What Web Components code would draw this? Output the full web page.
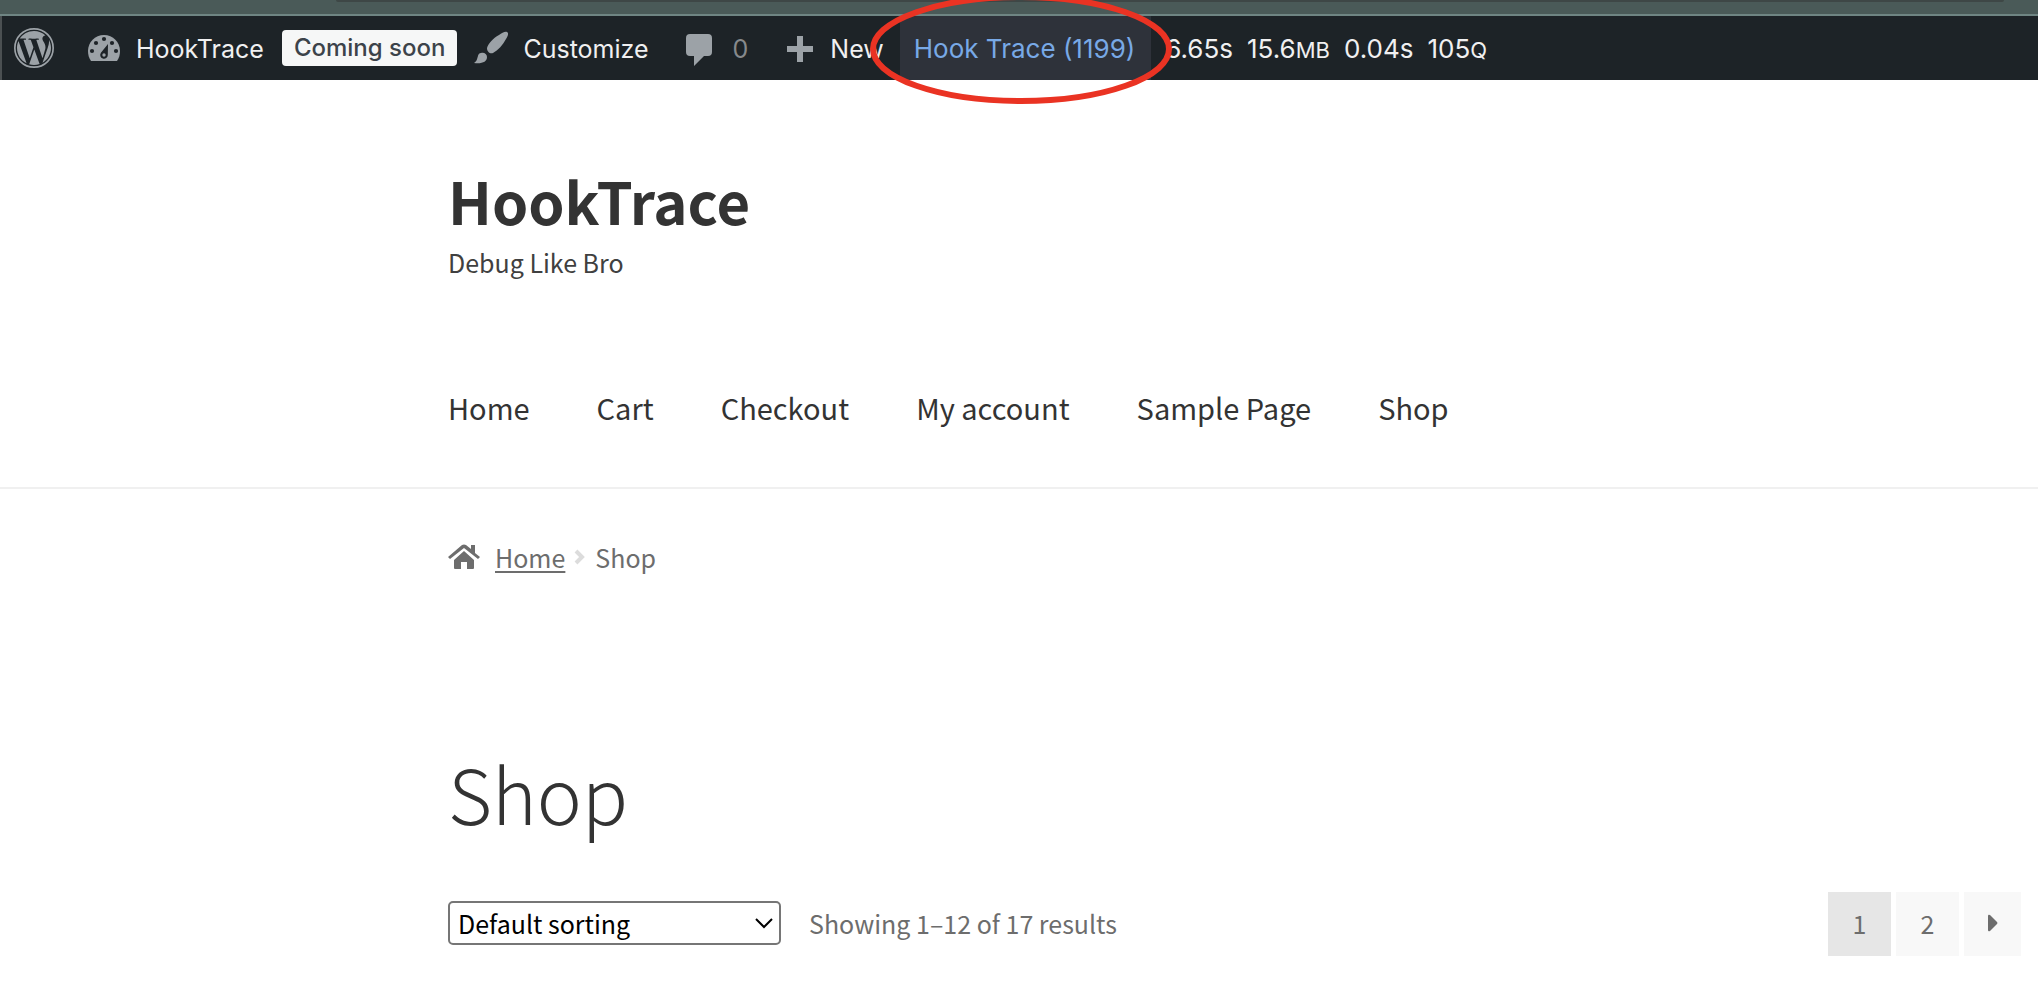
<!DOCTYPE html>
<html lang="en">
<head>
<meta charset="utf-8">
<meta name="viewport" content="width=device-width, initial-scale=1">
<title>Shop - HookTrace</title>
<style>
  body {
    margin: 0;
    background: #fff;
    color: #6d6d6d;
    font: 25px/36px "Noto Sans CJK SC", "Noto Sans", sans-serif;
    --gutter-left: 448px;
    --gutter-right: 17px;
  }
</style>
</head>
<body>
<browser-edge></browser-edge>
<admin-bar></admin-bar>
<site-header name="HookTrace" tagline="Debug Like Bro"></site-header>
<bread-crumb>
  <a slot="parent" href="#home">Home</a>
  Shop
</bread-crumb>
<shop-page heading="Shop">
  <sort-select slot="tools"></sort-select>
  <span slot="tools">Showing 1–12 of 17 results</span>
  <page-numbers slot="pages"></page-numbers>
</shop-page>

<script>
class BrowserEdge extends HTMLElement {
  constructor() {
    super();
    this.attachShadow({ mode: 'open' });
  }

  connectedCallback() {
    this.shadowRoot.innerHTML = `
      <style>
        :host {
          display: block;
          box-sizing: border-box;
          height: 16px;
          padding: 0 34px 0 336px;
          background: #4a5a58;
          border-bottom: 2px solid #6f8583;
        }
        div {
          height: 2px;
          background: #3e4746;
          border-radius: 0 0 12px 12px;
        }
      </style>
      <div></div>
    `;
  }
}

class AdminBar extends HTMLElement {
  constructor() {
    super();
    this.attachShadow({ mode: 'open' });
  }

  connectedCallback() {
    this.shadowRoot.innerHTML = `
      <style>
        :host {
          display: block;
          background: #1d2327;
          border-left: 2px solid #4b5052;
          color: #f0f0f1;
          font: 25px/62px Inter, "Liberation Sans", sans-serif;
        }
        nav {
          display: flex;
          height: 64px;
          padding-left: 12px;
          white-space: nowrap;
        }
        a {
          display: flex;
          align-items: center;
          padding-top: 2px;
          color: inherit;
          text-decoration: none;
        }
        svg { display: block; fill: #9ca2a7; }
        .logo, .status { padding-top: 0; }
        .logo { margin-right: 32px; }
        .site { gap: 14px; margin-right: 18px; }
        .badge {
          padding: 0 12px;
          border-radius: 4px;
          background: #f6f7f7;
          color: #3c434a;
          font-weight: 500;
          font-size: 24px;
          line-height: 36px;
        }
        .customize { gap: 14px; margin: 0 36px 0 16px; }
        .comments { gap: 20px; margin-right: 38px; color: #86898c; }
        .new { gap: 16px; margin-right: 16px; }
        .trace, .stats { font-size: 26px; }
        .trace {
          position: relative;
          padding-left: 14px;
          padding-right: 16px;
          background: #2e323a;
          color: #78a9e6;
        }
        .mark {
          position: absolute;
          left: -30px;
          top: -22px;
          fill: none;
          stroke: #ea3323;
          stroke-width: 6;
          z-index: 1;
        }
        .stats { gap: 14px; margin-left: 14px; }
        small { font-size: 22px; }
      </style>
      <nav aria-label="Toolbar">
        <a class="logo" href="#about" aria-label="About WordPress">
          <svg width="40" height="40" viewBox="0 0 24 24">
            <circle cx="12" cy="12" r="11.5" fill="none" stroke="#9ca2a7"/>
            <path transform="translate(.66 .66) scale(.945)" d="M21.469 6.825c.84 1.537 1.318 3.3 1.318 5.175 0 3.979-2.156 7.456-5.363 9.325l3.295-9.527c.615-1.54.82-2.771.82-3.864 0-.405-.026-.78-.07-1.11m-7.981.105c.647-.03 1.232-.105 1.232-.105.582-.075.514-.93-.067-.899 0 0-1.755.135-2.88.135-1.064 0-2.85-.15-2.85-.15-.585-.03-.661.855-.075.885 0 0 .54.061 1.125.09l1.68 4.605-2.37 7.08L5.354 6.9c.649-.03 1.234-.1 1.234-.1.585-.075.516-.93-.065-.896 0 0-1.746.138-2.874.138-.2 0-.438-.008-.69-.015C4.911 3.15 8.235 1.215 12 1.215c2.809 0 5.365 1.072 7.286 2.833-.046-.003-.091-.009-.141-.009-1.06 0-1.812.923-1.812 1.914 0 .89.513 1.643 1.06 2.531.411.72.89 1.643.89 2.977 0 .915-.354 1.994-.821 3.479l-1.075 3.585-3.9-11.61zM12 22.784c-1.059 0-2.081-.153-3.048-.437l3.237-9.406 3.315 9.087c.024.053.05.101.078.149-1.12.393-2.325.609-3.582.609M1.211 12c0-1.564.336-3.05.935-4.39L7.29 21.709C3.694 19.96 1.212 16.271 1.211 12"/>
          </svg>
        </a>
        <a class="site" href="#dashboard">
          <svg width="36" height="32" viewBox="0 0 36 32">
            <path d="M18 2C9 2 2 9 2 18c0 4 1 7 3 10h26c2-3 3-6 3-10C34 9 27 2 18 2z"/>
            <g fill="#1d2327">
              <circle cx="18" cy="6" r="2.1"/><circle cx="10" cy="10" r="2.1"/>
              <circle cx="26" cy="10" r="2.1"/><circle cx="6" cy="18" r="2.1"/>
              <circle cx="30" cy="18" r="2.1"/>
              <path d="M22 11l-.2 11a3.8 3.8 0 1 1-6.9-2.2z"/>
            </g>
            <circle cx="18" cy="22" r="1.7"/>
          </svg>
          HookTrace
        </a>
        <a class="status" href="#visibility"><span class="badge">Coming soon</span></a>
        <a class="customize" href="#customize">
          <svg width="36" height="36" viewBox="0 0 36 36">
            <path d="M34 1c2 1 1 4-1 7-3 6-8 11-13 14-3 1-6-1-6-5 1-4 6-10 12-13 3-2 6-4 8-3z"/>
            <path d="M8 22c3-1 6 1 6 4 0 5-5 7-13 6 3-2 3-4 4-7 0-1 1-3 3-3z"/>
          </svg>
          Customize
        </a>
        <a class="comments" href="#comments">
          <svg width="28" height="36" viewBox="0 0 28 36">
            <path d="M5 3h18q4 0 4 4v14q0 4-4 4h-4L9 35V25H5q-4 0-4-4V7q0-4 4-4z"/>
          </svg>
          0
        </a>
        <a class="new" href="#new">
          <svg width="28" height="28" viewBox="0 0 28 28"><path d="M11 1h6v10h10v6H17v10h-6V17H1v-6h10z"/></svg>
          New
        </a>
        <a class="trace" href="#trace">
          Hook Trace (1199)
          <svg class="mark" width="302" height="110"><ellipse cx="151" cy="55" rx="148" ry="52"/></svg>
        </a>
        <a class="stats" href="#queries">
          <span>6.65s</span>
          <span>15.6<small>MB</small></span>
          <span>0.04s</span>
          <span>105<small>Q</small></span>
        </a>
      </nav>
    `;
  }
}

class SiteHeader extends HTMLElement {
  constructor() {
    super();
    this.attachShadow({ mode: 'open' });
  }

  connectedCallback() {
    const pages = ['Home', 'Cart', 'Checkout', 'My account', 'Sample Page', 'Shop'];

    this.shadowRoot.innerHTML = `
      <style>
        :host {
          display: block;
          padding: 88px var(--gutter-right) 60px var(--gutter-left);
          border-bottom: 2px solid #f0f0f0;
          color: #404040;
        }
        a { color: #333; text-decoration: none; }
        .title { font-size: 58px; font-weight: 700; line-height: 64px; }
        p { margin: 12px 0 107px; }
        nav {
          display: flex;
          flex-wrap: wrap;
          gap: 67px;
          font-size: 29px;
          line-height: 40px;
        }
      </style>
      <a class="title" href="#home">${this.getAttribute('name')}</a>
      <p>${this.getAttribute('tagline')}</p>
      <nav aria-label="Primary">
        ${pages.map(page => `<a href="#">${page}</a>`).join('')}
      </nav>
    `;
  }
}

class BreadCrumb extends HTMLElement {
  constructor() {
    super();
    this.attachShadow({ mode: 'open' });
  }

  connectedCallback() {
    this.shadowRoot.innerHTML = `
      <style>
        :host {
          display: block;
          padding: 50px var(--gutter-right) 0 var(--gutter-left);
        }
        nav { display: flex; align-items: center; }
        svg { display: block; fill: #6d6d6d; }
        .home { margin-right: 15px; }
        .arrow { margin: 0 9px; fill: none; stroke: #dcdcdc; stroke-width: 4; }
        ::slotted(a) {
          color: inherit;
          text-decoration-thickness: 2px;
          text-underline-offset: 3px;
        }
      </style>
      <nav aria-label="Breadcrumb">
        <svg class="home" width="32" height="28" viewBox="0 0 32 28">
          <path d="M16 8l10 9v8q0 1-1 1h-6v-7h-6v7H7q-1 0-1-1v-8z"/>
          <path d="M0 14L14 2q2-1 4 0l5 4V2h4v8l5 4-2 2L16 5 2 16z"/>
        </svg>
        <slot name="parent"></slot>
        <svg class="arrow" width="12" height="16" viewBox="0 0 12 16"><path d="M2 2l6 6-6 6"/></svg>
        <span><slot></slot></span>
      </nav>
    `;
  }
}

class ShopPage extends HTMLElement {
  constructor() {
    super();
    this.attachShadow({ mode: 'open' });
  }

  connectedCallback() {
    this.shadowRoot.innerHTML = `
      <style>
        :host {
          display: block;
          padding: 171px var(--gutter-right) 44px var(--gutter-left);
        }
        h1 {
          margin: 0 0 54px;
          color: #333;
          font-size: 76px;
          font-weight: 300;
          line-height: 92px;
        }
        .bar, .tools { display: flex; align-items: center; }
        .bar { justify-content: space-between; }
        .tools { gap: 28px; padding-bottom: 2px; }
      </style>
      <main>
        <h1>${this.getAttribute('heading')}</h1>
        <div class="bar">
          <div class="tools"><slot name="tools"></slot></div>
          <slot name="pages"></slot>
        </div>
      </main>
    `;
  }
}

class SortSelect extends HTMLElement {
  constructor() {
    super();
    this.attachShadow({ mode: 'open' });
  }

  connectedCallback() {
    this.shadowRoot.innerHTML = `
      <style>
        :host { display: block; position: relative; }
        select {
          display: block;
          appearance: none;
          width: 333px;
          height: 44px;
          padding: 0 40px 0 8px;
          border: 2px solid #767676;
          border-radius: 5px;
          background: #fff;
          color: #000;
          font: inherit;
        }
        svg {
          position: absolute;
          right: 8px;
          top: 16px;
          fill: none;
          stroke: #000;
          stroke-width: 2;
          pointer-events: none;
        }
      </style>
      <select aria-label="Shop order">
        <option>Default sorting</option>
        <option>Sort by popularity</option>
        <option>Sort by latest</option>
      </select>
      <svg width="18" height="12" viewBox="0 0 18 12"><path d="M1 2l8 8 8-8"/></svg>
    `;
  }
}

class PageNumbers extends HTMLElement {
  constructor() {
    super();
    this.attachShadow({ mode: 'open' });
  }

  connectedCallback() {
    this.shadowRoot.innerHTML = `
      <style>
        :host { display: block; }
        nav { display: flex; gap: 5px; }
        nav > * {
          display: grid;
          place-items: center;
          box-sizing: border-box;
          width: 63px;
          height: 64px;
          padding-bottom: 2px;
          background: #f8f8f8;
          color: inherit;
          text-decoration: none;
        }
        .current { background: #e6e6e6; }
        .next { width: 57px; }
        svg { display: block; fill: #6d6d6d; }
      </style>
      <nav aria-label="Product pages">
        <span class="current" aria-current="page">1</span>
        <a href="#page-2">2</a>
        <a class="next" href="#page-2" aria-label="Next">
          <svg width="12" height="18" viewBox="0 0 12 18"><path d="M1 2q0-2 2-1l7 7q1 1 0 2l-7 7q-2 1-2-1z"/></svg>
        </a>
      </nav>
    `;
  }
}

customElements.define('browser-edge', BrowserEdge);
customElements.define('admin-bar', AdminBar);
customElements.define('site-header', SiteHeader);
customElements.define('bread-crumb', BreadCrumb);
customElements.define('shop-page', ShopPage);
customElements.define('sort-select', SortSelect);
customElements.define('page-numbers', PageNumbers);
</script>
</body>
</html>
